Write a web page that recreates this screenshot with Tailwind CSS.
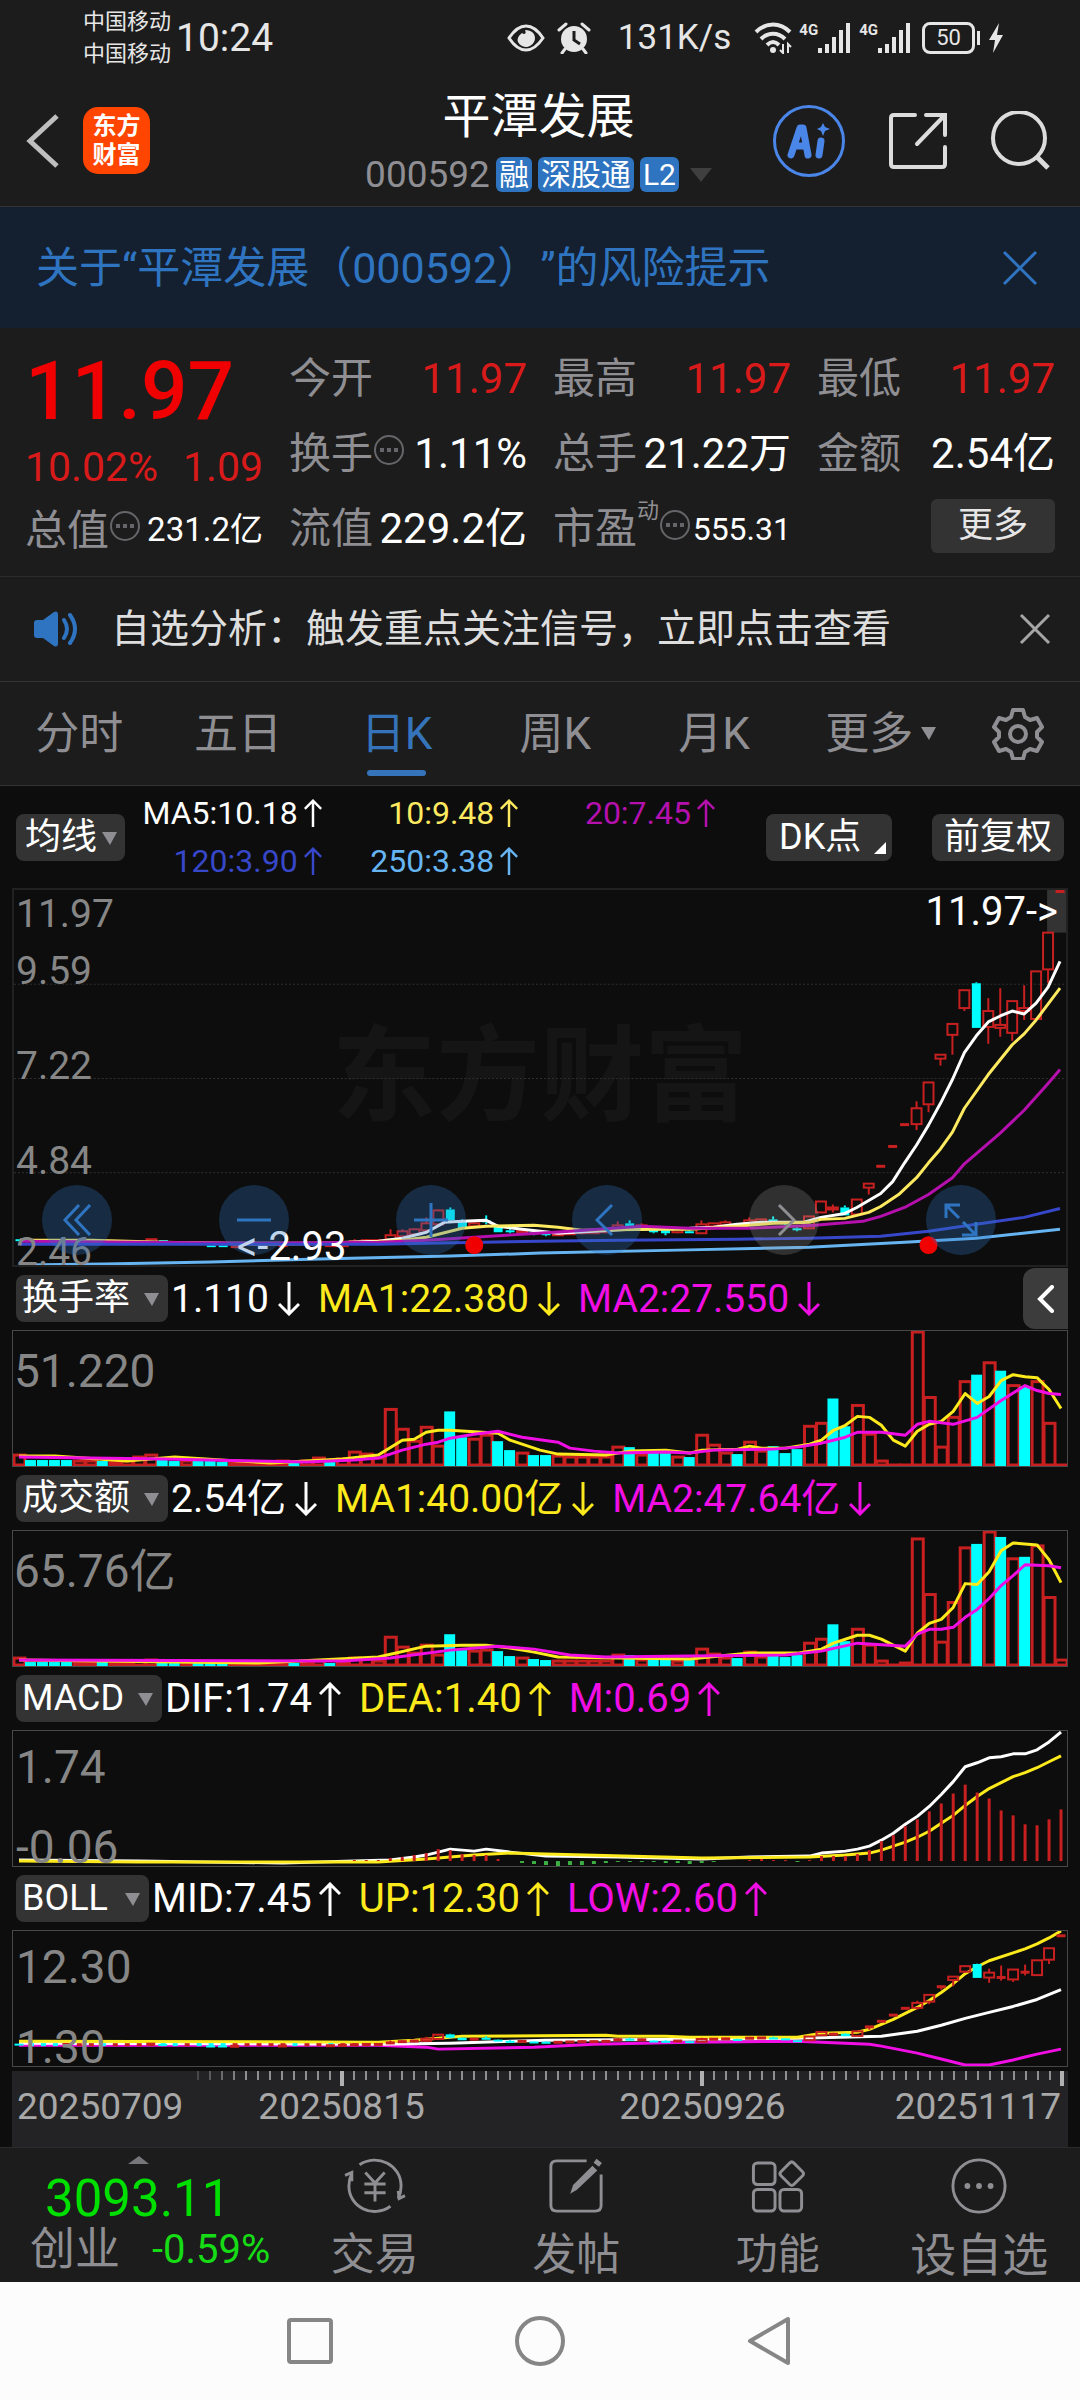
<!DOCTYPE html>
<html lang="zh-CN">
<head>
    <meta charset="UTF-8">
    <meta name="viewport" content="width=device-width, initial-scale=1.0">
    <title>平潭发展 000592</title>
    <script src="https://cdn.jsdelivr.net/npm/@tailwindcss/browser@4"></script>
</head>
<body class="bg-[#1c1c1c] text-white font-[Roboto,'Noto_Sans_CJK_SC',sans-serif]">
    <!-- shared icons -->
    <svg class="hidden">
        <symbol id="up" viewBox="0 0 22 34"><path d="M11 34V2M1 12L11 2l10 10" fill="none" stroke="currentColor" stroke-width="3"/></symbol>
        <symbol id="dn" viewBox="0 0 22 34"><path d="M11 0v32M1 22l10 10 10-10" fill="none" stroke="currentColor" stroke-width="3"/></symbol>
        <symbol id="tri" viewBox="0 0 15 13"><path d="M0 0h15L8 13z" fill="#8e8e93"/></symbol>
        <symbol id="info" viewBox="0 0 32 32"><circle cx="16" cy="16" r="14" fill="none" stroke="#66666a" stroke-width="2"/><path d="M7 16h4M14 16h4M21 16h4" stroke="#66666a" stroke-width="4"/></symbol>
        <symbol id="signal" viewBox="0 0 32 32"><path d="M0 26h4v5H0zM7 22h4v9H7zM14 15h4v16h-4zM21 8h4v23h-4zM28 1h4v30h-4z" fill="#e6e6e6"/></symbol>
    </svg>

    <div class="flex flex-col w-full min-h-screen">

        <!-- status bar -->
        <div class="flex items-center h-[75px] pl-[83px] pr-[76px] text-[#e6e6e6]">
            <div class="text-[22px] leading-[32px]">
                <div>中国移动</div>
                <div>中国移动</div>
            </div>
            <div class="ml-[5px] text-[39px] leading-[48px]">10:24</div>
            <div class="flex items-center ml-auto">
                <svg class="w-[38px] h-[32px]" viewBox="0 0 38 28" fill="none">
                    <path d="M2 14C8 5 13 2 19 2s11 3 17 12c-6 9-11 12-17 12S8 23 2 14z" stroke="#e6e6e6" stroke-width="3"/>
                    <path d="M18 6c2 4-1 5-3 3-4 3-5 6-4 9 2 4 6 5 9 5 5-1 8-5 8-9s-3-8-10-8z" fill="#e6e6e6"/>
                </svg>
                <svg class="w-[34px] h-[32px] ml-[12px]" viewBox="0 0 34 32" fill="none">
                    <circle cx="17" cy="17" r="13" fill="#e6e6e6"/>
                    <path d="M2 8l7-6M32 8l-7-6M8 27l-3 4M26 27l3 4" stroke="#e6e6e6" stroke-width="3" stroke-linecap="round"/>
                    <path d="M17 9v9l6 4" stroke="#1c1c1c" stroke-width="3"/>
                </svg>
                <span class="ml-[27px] text-[35px] leading-[48px]">131K/s</span>
                <svg class="w-[40px] h-[32px] ml-[23px]" viewBox="0 0 40 32" fill="none" stroke="#e6e6e6" stroke-width="4">
                    <path d="M2 10C12 0 26 0 36 10"/>
                    <path d="M7 17c7-7 17-7 24 0"/>
                    <path d="M13 23c4-4 8-4 12 0"/>
                    <circle cx="19" cy="28" r="3" fill="#e6e6e6" stroke="none"/>
                    <path d="M29 22v9l-3-3M34 31v-9l3 3" stroke-width="2"/>
                </svg>
                <div class="flex ml-[5px]">
                    <span class="text-[15px] leading-[16px] font-bold">4G</span>
                    <svg class="w-[32px] h-[32px]"><use href="#signal"/></svg>
                </div>
                <div class="flex ml-[9px]">
                    <span class="text-[15px] leading-[16px] font-bold">4G</span>
                    <svg class="w-[32px] h-[32px]"><use href="#signal"/></svg>
                </div>
                <div class="flex items-center justify-center w-[53px] h-[32px] ml-[12px] border-3 border-[#e6e6e6] rounded-[8px] text-[22px] leading-[26px]">50</div>
                <div class="w-[3px] h-[14px] ml-[2px] bg-[#e6e6e6]"></div>
                <svg class="w-[16px] h-[30px] ml-[8px]" viewBox="0 0 16 30" fill="#e6e6e6"><path d="M11 0L1 17h6L5 30 15 12H9z"/></svg>
            </div>
        </div>

        <!-- title -->
        <header class="grid grid-cols-[1fr_auto_1fr] items-center h-[131px] pl-[26px] pr-[29px]">
            <div class="flex items-center gap-[23px]">
                <button aria-label="返回">
                    <svg class="w-[34px] h-[56px]" viewBox="0 0 34 56" fill="none" stroke="#bfbfbf" stroke-width="5"><path d="M31 3L4 28l27 25"/></svg>
                </button>
                <div class="flex flex-col items-center justify-center w-[67px] h-[67px] rounded-[15px] bg-[#ff4500] text-[24px] leading-[29px] font-bold">
                    <span>东方</span>
                    <span>财富</span>
                </div>
            </div>
            <div class="flex flex-col items-center gap-[12px]">
                <h1 class="text-[48px] leading-[56px]">平潭发展</h1>
                <div class="flex items-center gap-[6px] h-[36px] text-[30px] leading-[35px]">
                    <span class="text-[37px] text-[#8e8e93]">000592</span>
                    <span class="px-[3px] rounded-[6px] bg-[#2f74c0]">融</span>
                    <span class="px-[3px] rounded-[6px] bg-[#2f74c0]">深股通</span>
                    <span class="px-[3px] rounded-[6px] bg-[#2f74c0]">L2</span>
                    <svg class="w-[22px] h-[14px] ml-[5px]" viewBox="0 0 22 14"><path d="M0 0h22L11 14z" fill="#3f3f3f"/></svg>
                </div>
            </div>
            <div class="flex items-center justify-end gap-[43px]">
                <button class="flex items-center justify-center w-[72px] h-[72px] rounded-full border-3 border-[#4a86e8]" aria-label="Ai">
                    <svg class="w-[46px] h-[36px]" viewBox="0 0 46 36" fill="none" stroke="#4a86e8" stroke-linecap="round" stroke-linejoin="round">
                        <path d="M5 32L14 5h3l5 27M10 23h10" stroke-width="7"/>
                        <path d="M35 18l-2 14" stroke-width="7"/>
                        <path d="M37 0l2 4 5 2-5 2-2 5-2-5-4-2 4-2z" fill="#4a86e8" stroke="none"/>
                    </svg>
                </button>
                <button aria-label="分享">
                    <svg class="w-[60px] h-[60px]" viewBox="0 0 60 60" fill="none" stroke="#dcdcdc" stroke-width="4">
                        <path d="M27 4H6q-3 0-3 3v46q0 3 3 3h48q3 0 3-3V36" stroke-linecap="round"/>
                        <path d="M38 4h19v20M56 5L29 33" stroke-linecap="round"/>
                    </svg>
                </button>
                <button aria-label="搜索">
                    <svg class="w-[60px] h-[60px]" viewBox="0 0 60 60" fill="none" stroke="#dcdcdc" stroke-width="4"><circle cx="28" cy="27" r="26"/><path d="M46 46l11 11" stroke-width="5"/></svg>
                </button>
            </div>
        </header>

        <!-- risk banner -->
        <div class="flex items-center justify-between h-[122px] pl-[36px] pr-[42px] bg-[#14202f] border-t border-[#333] text-[#2f74c0]">
            <a href="#" class="text-[43px] leading-[56px] [text-spacing-trim:space-all]">关于“平潭发展（000592）”的风险提示</a>
            <button aria-label="关闭提示">
                <svg class="w-[36px] h-[36px]" viewBox="0 0 36 36" stroke="#2f74c0" stroke-width="3"><path d="M2 2l32 32M34 2L2 34"/></svg>
            </button>
        </div>

        <!-- quote -->
        <section class="flex gap-[26px] h-[249px] pl-[25px] pr-[25px] pt-[13px] border-b border-[#2b2b2b] text-[42px]">
            <div class="w-[238px]">
                <div class="flex items-center h-[100px] text-[82px] leading-[100px] font-medium text-[#f00000]">11.97</div>
                <div class="flex items-center justify-between h-[54px] text-[41px] text-[#d81a1a]"><span>10.02%</span><span>1.09</span></div>
                <div class="flex items-center h-[70px] whitespace-nowrap">
                    <span class="text-[#8e8e93]">总值</span>
                    <svg class="w-[32px] h-[32px] mb-[8px]"><use href="#info"/></svg>
                    <span class="ml-auto text-[33px]">231.2亿</span>
                </div>
            </div>
            <div class="grid flex-1 grid-cols-3 auto-rows-[75px] gap-x-[26px] whitespace-nowrap">
                <div class="flex items-center justify-between"><span class="text-[#8e8e93]">今开</span><span class="text-[#d81a1a]">11.97</span></div>
                <div class="flex items-center justify-between"><span class="text-[#8e8e93]">最高</span><span class="text-[#d81a1a]">11.97</span></div>
                <div class="flex items-center justify-between"><span class="text-[#8e8e93]">最低</span><span class="text-[#d81a1a]">11.97</span></div>
                <div class="flex items-center">
                    <span class="text-[#8e8e93]">换手</span>
                    <svg class="w-[32px] h-[32px] mb-[8px]"><use href="#info"/></svg>
                    <span class="ml-auto">1.11%</span>
                </div>
                <div class="flex items-center justify-between"><span class="text-[#8e8e93]">总手</span><span>21.22万</span></div>
                <div class="flex items-center justify-between"><span class="text-[#8e8e93]">金额</span><span>2.54亿</span></div>
                <div class="flex items-center justify-between"><span class="text-[#8e8e93]">流值</span><span>229.2亿</span></div>
                <div class="flex items-center">
                    <span class="text-[#8e8e93]">市盈</span>
                    <span class="mb-[36px] text-[22px] leading-[30px] text-[#8e8e93]">动</span>
                    <svg class="w-[32px] h-[32px] mb-[8px]"><use href="#info"/></svg>
                    <span class="ml-auto text-[32px]">555.31</span>
                </div>
                <div class="flex items-center justify-end"><button class="w-[124px] h-[54px] mb-[5px] rounded-[6px] bg-[#333] text-[35px] leading-[54px] text-[#e6e6e6]">更多</button></div>
            </div>
        </section>

        <!-- notice -->
        <div class="flex items-center h-[105px] pl-[32px] pr-[29px] border-b border-[#333]">
            <svg class="w-[48px] h-[40px]" viewBox="0 0 48 40" fill="none" stroke="#2f74c0" stroke-width="4">
                <path d="M2 14q0-3 3-3h6L22 3q4-2 4 3v28q0 5-4 3l-11-8H5q-3 0-3-3z" fill="#2f74c0" stroke="none"/>
                <path d="M32 11q6 9 0 18M38 6q10 14 0 28" stroke-linecap="round"/>
            </svg>
            <a href="#" class="ml-[31px] text-[39px] leading-[52px] text-[#dedede]">自选分析：触发重点关注信号，立即点击查看</a>
            <button class="ml-auto" aria-label="关闭通知">
                <svg class="w-[32px] h-[32px]" viewBox="0 0 32 32" stroke="#a6a6a6" stroke-width="3"><path d="M2 2l28 28M30 2L2 30"/></svg>
            </button>
        </div>

        <!-- period tabs -->
        <nav class="flex items-center h-[104px] border-b border-[#333] text-[44px] leading-[60px] text-[#8e8e93]">
            <div class="flex flex-1">
                <button class="flex-1">分时</button>
                <button class="flex-1">五日</button>
                <button class="flex flex-1 justify-center text-[#3574ba]"><span class="relative">日K<span class="absolute inset-x-[6px] -bottom-[12px] h-[6px] rounded-full bg-[#3574ba]"></span></span></button>
                <button class="flex-1">周K</button>
                <button class="flex-1">月K</button>
                <button class="flex flex-1 items-center justify-center gap-[8px] pl-[8px]">更多<svg class="w-[15px] h-[13px]"><use href="#tri"/></svg></button>
            </div>
            <button aria-label="设置" class="flex w-[120px] pl-[32px]">
                <svg class="w-[52px] h-[52px]" viewBox="0 0 52 52" fill="none" stroke="#8e8e93" stroke-width="4" stroke-linejoin="round">
                    <path d="M21 2h10l2 7 5 3 7-2 5 9-5 5v5l5 5-5 9-7-2-5 3-2 7H21l-2-7-5-3-7 2-5-9 5-5v-5l-5-5 5-9 7 2 5-3z"/>
                    <circle cx="26" cy="26" r="8"/>
                </svg>
            </button>
        </nav>

        <main class="bg-[#0d0d0d] px-[12px]">
            <!-- moving averages -->
            <div class="flex items-center h-[102px] px-[4px] text-[36px]">
                <div class="relative">
                    <select aria-label="主图指标" class="appearance-none block h-[47px] pl-[9px] pr-[27px] rounded-[8px] bg-[#333] leading-[47px]"><option>均线</option></select>
                    <svg class="absolute right-[8px] top-[18px] w-[15px] h-[13px] pointer-events-none"><use href="#tri"/></svg>
                </div>
                <div class="grid flex-1 grid-cols-3 justify-items-end mr-[51px] text-[32px] leading-[48px] whitespace-nowrap">
                    <span class="flex items-center gap-[6px]">MA5:10.18<svg class="w-[18px] h-[28px]"><use href="#up"/></svg></span>
                    <span class="flex items-center gap-[6px] text-[#fdea60]">10:9.48<svg class="w-[18px] h-[28px]"><use href="#up"/></svg></span>
                    <span class="flex items-center gap-[6px] text-[#b510ae]">20:7.45<svg class="w-[18px] h-[28px]"><use href="#up"/></svg></span>
                    <span class="flex items-center gap-[6px] text-[#3747c9]">120:3.90<svg class="w-[18px] h-[28px]"><use href="#up"/></svg></span>
                    <span class="flex items-center gap-[6px] text-[#66b5f2]">250:3.38<svg class="w-[18px] h-[28px]"><use href="#up"/></svg></span>
                </div>
                <button class="relative w-[126px] h-[47px] pl-[13px] rounded-[8px] bg-[#333] leading-[47px] text-left">DK点<svg class="absolute right-[6px] bottom-[7px] w-[12px] h-[12px]" viewBox="0 0 12 12"><path d="M12 0v12H0z" fill="#fff"/></svg></button>
                <button class="w-[132px] h-[47px] ml-[40px] rounded-[8px] bg-[#333] leading-[47px]">前复权</button>
            </div>

            <!-- price chart -->
            <div class="relative h-[379px] border-2 border-[#212121] text-[39px] leading-[48px] text-[#868686]">
                <div class="absolute inset-0 flex items-center justify-center text-[104px] font-bold text-[#151515]">东方财富</div>
                <svg id="price" class="absolute inset-0 w-full h-full" viewBox="0 0 1056 378" preserveAspectRatio="none" fill="none"></svg>
                <span class="absolute left-[2px] top-[0px]">11.97</span>
                <span class="absolute left-[2px] top-[57px]">9.59</span>
                <span class="absolute left-[2px] top-[152px]">7.22</span>
                <span class="absolute left-[2px] top-[247px]">4.84</span>
                <span class="absolute left-[2px] top-[338px]">2.46</span>
                <span class="absolute right-[8px] top-[-2px] text-[40px] text-white">11.97-&gt;</span>
                <span class="absolute left-[223px] top-[333px] text-[40px] text-white">&lt;-2.93</span>
                <div class="absolute left-[28px] right-[70px] top-[295px] flex justify-between">
                    <button class="flex items-center justify-center w-[70px] h-[70px] rounded-full bg-[#2f74c0]/30" aria-label="最左">
                        <svg class="w-[30px] h-[34px]" viewBox="0 0 30 34" fill="none" stroke="#2f74c0" stroke-width="3"><path d="M17 2L3 17l14 15M28 2L14 17l14 15"/></svg>
                    </button>
                    <button class="flex items-center justify-center w-[70px] h-[70px] rounded-full bg-[#2f74c0]/30" aria-label="缩小">
                        <svg class="w-[34px] h-[34px]" viewBox="0 0 34 34" stroke="#2f74c0" stroke-width="3"><path d="M0 17h34"/></svg>
                    </button>
                    <button class="flex items-center justify-center w-[70px] h-[70px] rounded-full bg-[#2f74c0]/30" aria-label="放大">
                        <svg class="w-[34px] h-[34px]" viewBox="0 0 34 34" stroke="#2f74c0" stroke-width="3"><path d="M0 17h34M17 0v34"/></svg>
                    </button>
                    <button class="flex items-center justify-center w-[70px] h-[70px] rounded-full bg-[#2f74c0]/30" aria-label="左移">
                        <svg class="w-[24px] h-[34px]" viewBox="0 0 24 34" fill="none" stroke="#2f74c0" stroke-width="3"><path d="M17 2L2 17l15 15"/></svg>
                    </button>
                    <button class="flex items-center justify-center w-[70px] h-[70px] rounded-full bg-[#9a9a9a]/25" aria-label="右移">
                        <svg class="w-[24px] h-[34px]" viewBox="0 0 24 34" fill="none" stroke="#8e8e93" stroke-width="3"><path d="M7 2l15 15L7 32"/></svg>
                    </button>
                    <button class="flex items-center justify-center w-[70px] h-[70px] rounded-full bg-[#2f74c0]/30" aria-label="全屏">
                        <svg class="w-[36px] h-[36px]" viewBox="0 0 36 36" fill="none" stroke="#2f74c0" stroke-width="3"><path d="M3 16V3h14M3 3l13 13M33 20v13H19M33 33L20 20"/></svg>
                    </button>
                </div>
            </div>

            <!-- turnover rate -->
            <div class="flex items-center h-[63px] pl-[4px] text-[39px] leading-[48px]">
                <div class="relative text-[36px]">
                    <select aria-label="副图一" class="appearance-none block h-[47px] pl-[6px] pr-[37px] rounded-[8px] bg-[#333] leading-[47px]"><option>换手率</option></select>
                    <svg class="absolute right-[9px] top-[18px] w-[15px] h-[13px] pointer-events-none"><use href="#tri"/></svg>
                </div>
                <span class="flex items-center gap-[9px] ml-[3px]">1.110<svg class="w-[22px] h-[34px]"><use href="#dn"/></svg></span>
                <span class="flex items-center gap-[9px] ml-[18px] text-[#fdea1c]">MA1:22.380<svg class="w-[22px] h-[34px]"><use href="#dn"/></svg></span>
                <span class="flex items-center gap-[9px] ml-[18px] text-[#f00ee4]">MA2:27.550<svg class="w-[22px] h-[34px]"><use href="#dn"/></svg></span>
                <button class="flex items-center justify-center w-[45px] h-[61px] ml-auto rounded-l-[12px] bg-[#3c3c3c]" aria-label="展开">
                    <svg class="w-[18px] h-[28px]" viewBox="0 0 18 28" fill="none" stroke="#fff" stroke-width="4" stroke-linecap="round"><path d="M15 2L3 14l12 12"/></svg>
                </button>
            </div>
            <div class="relative h-[137px] border border-[#484848] text-[46px] leading-[56px] text-[#868686]">
                <svg id="turnover" class="absolute inset-0 w-full h-full" viewBox="0 0 1056 136" preserveAspectRatio="none" fill="none"></svg>
                <span class="absolute left-[1px] top-[12px]">51.220</span>
            </div>

            <!-- amount -->
            <div class="flex items-center h-[63px] pl-[4px] text-[39px] leading-[48px]">
                <div class="relative text-[36px]">
                    <select aria-label="副图二" class="appearance-none block h-[47px] pl-[6px] pr-[37px] rounded-[8px] bg-[#333] leading-[47px]"><option>成交额</option></select>
                    <svg class="absolute right-[9px] top-[18px] w-[15px] h-[13px] pointer-events-none"><use href="#tri"/></svg>
                </div>
                <span class="flex items-center gap-[9px] ml-[3px]">2.54亿<svg class="w-[22px] h-[34px]"><use href="#dn"/></svg></span>
                <span class="flex items-center gap-[9px] ml-[18px] text-[#fdea1c]">MA1:40.00亿<svg class="w-[22px] h-[34px]"><use href="#dn"/></svg></span>
                <span class="flex items-center gap-[9px] ml-[18px] text-[#f00ee4]">MA2:47.64亿<svg class="w-[22px] h-[34px]"><use href="#dn"/></svg></span>
            </div>
            <div class="relative h-[137px] border border-[#484848] text-[46px] leading-[56px] text-[#868686]">
                <svg id="amount" class="absolute inset-0 w-full h-full" viewBox="0 0 1056 136" preserveAspectRatio="none" fill="none"></svg>
                <span class="absolute left-[1px] top-[12px]">65.76亿</span>
            </div>

            <!-- macd -->
            <div class="flex items-center h-[63px] pl-[4px] text-[40px] leading-[48px]">
                <div class="relative text-[36px]">
                    <select aria-label="副图三" class="appearance-none block h-[47px] pl-[6px] pr-[37px] rounded-[8px] bg-[#333] leading-[47px]"><option>MACD</option></select>
                    <svg class="absolute right-[9px] top-[18px] w-[15px] h-[13px] pointer-events-none"><use href="#tri"/></svg>
                </div>
                <span class="flex items-center gap-[7px] ml-[3px]">DIF:1.74<svg class="w-[22px] h-[34px]"><use href="#up"/></svg></span>
                <span class="flex items-center gap-[7px] ml-[18px] text-[#fdea1c]">DEA:1.40<svg class="w-[22px] h-[34px]"><use href="#up"/></svg></span>
                <span class="flex items-center gap-[7px] ml-[18px] text-[#f00ee4]">M:0.69<svg class="w-[22px] h-[34px]"><use href="#up"/></svg></span>
            </div>
            <div class="relative h-[137px] border border-[#484848] text-[46px] leading-[56px] text-[#868686]">
                <svg id="macd" class="absolute inset-0 w-full h-full" viewBox="0 0 1056 136" preserveAspectRatio="none" fill="none"></svg>
                <span class="absolute left-[3px] top-[8px]">1.74</span>
                <span class="absolute left-[3px] top-[88px]">-0.06</span>
            </div>

            <!-- boll -->
            <div class="flex items-center h-[63px] pl-[4px] text-[40px] leading-[48px]">
                <div class="relative text-[36px]">
                    <select aria-label="副图四" class="appearance-none block h-[47px] pl-[6px] pr-[41px] rounded-[8px] bg-[#333] leading-[47px]"><option>BOLL</option></select>
                    <svg class="absolute right-[9px] top-[18px] w-[15px] h-[13px] pointer-events-none"><use href="#tri"/></svg>
                </div>
                <span class="flex items-center gap-[7px] ml-[3px]">MID:7.45<svg class="w-[22px] h-[34px]"><use href="#up"/></svg></span>
                <span class="flex items-center gap-[7px] ml-[18px] text-[#fdea1c]">UP:12.30<svg class="w-[22px] h-[34px]"><use href="#up"/></svg></span>
                <span class="flex items-center gap-[7px] ml-[18px] text-[#f00ee4]">LOW:2.60<svg class="w-[22px] h-[34px]"><use href="#up"/></svg></span>
            </div>
            <div class="relative h-[137px] border border-[#484848] text-[46px] leading-[56px] text-[#868686]">
                <svg id="boll" class="absolute inset-0 w-full h-full" viewBox="0 0 1056 136" preserveAspectRatio="none" fill="none"></svg>
                <span class="absolute left-[3px] top-[8px]">12.30</span>
                <span class="absolute left-[3px] top-[88px]">1.30</span>
            </div>

            <!-- dates -->
            <div class="relative h-[76px] mt-[4px] pt-[12px] bg-[#232325] text-[37px] leading-[48px] text-[#a8a8a8]">
                <svg id="axis" class="absolute left-0 top-0 w-full h-[16px]" viewBox="0 0 1056 16" preserveAspectRatio="none"></svg>
                <div class="flex pl-[5px] pr-[7px]">
                    <span>20250709</span>
                    <span class="ml-[75px]">20250815</span>
                    <span class="ml-auto mr-[109px]">20250926</span>
                    <span>20251117</span>
                </div>
            </div>
        </main>

        <!-- bottom bar -->
        <footer class="flex h-[135px] border-t border-[#2b2b2b] text-[44px] leading-[54px] text-[#8e8e93]">
            <a href="#" class="flex flex-col w-[274px] pl-[30px]">
                <svg class="w-[21px] h-[8px] mt-[8px] ml-[98px]" viewBox="0 0 21 8"><path d="M0 8h21L11 0z" fill="#77777b"/></svg>
                <span class="ml-[15px] mt-[8px] text-[51px] text-[#00e000]">3093.11</span>
                <span class="flex items-center text-[45px] leading-[48px]">创业<span class="ml-[32px] text-[40px] text-[#16dc16]">-0.59%</span></span>
            </a>
            <button class="flex flex-col items-center flex-1 pt-[9px]">
                <svg class="w-[66px] h-[60px]" viewBox="0 0 66 60" fill="none" stroke="#8e8e93" stroke-width="3">
                    <path d="M17 8C35-4 60 8 60 30q0 7-3 13M49 51C31 64 6 52 6 30q0-7 3-13"/>
                    <path d="M2 19l7-3v9M64 40l-6 3-1-8"/>
                    <path d="M23 16l10 11 10-11M33 27v19M22 28h22M22 37h22"/>
                </svg>
                <span class="mt-[13px]">交易</span>
            </button>
            <button class="flex flex-col items-center flex-1 pt-[9px]">
                <svg class="w-[60px] h-[60px]" viewBox="0 0 60 60" fill="none" stroke="#8e8e93" stroke-width="3">
                    <path d="M41 4H10q-6 0-6 6v40q0 6 6 6h40q6 0 6-6V18"/>
                    <path d="M24 38l3-9L47 9l5 5-21 20z" fill="#8e8e93" stroke="none"/>
                    <path d="M51 8l3-4" stroke-width="7"/>
                </svg>
                <span class="mt-[13px]">发帖</span>
            </button>
            <button class="flex flex-col items-center flex-1 pt-[9px]">
                <svg class="w-[60px] h-[60px]" viewBox="0 0 60 60" fill="none" stroke="#8e8e93" stroke-width="3">
                    <rect x="5" y="6" width="22" height="22" rx="4"/>
                    <path d="M42 6q2-2 4 0l9 9q2 2 0 4l-9 9q-2 2-4 0l-9-9q-2-2 0-4z"/>
                    <rect x="5" y="33" width="22" height="22" rx="4"/>
                    <rect x="32" y="33" width="22" height="22" rx="4"/>
                </svg>
                <span class="mt-[12px] text-[42px]">功能</span>
            </button>
            <button class="flex flex-col items-center flex-1 pt-[9px]">
                <svg class="w-[60px] h-[60px]" viewBox="0 0 60 60" fill="#8e8e93">
                    <circle cx="30" cy="30" r="27" fill="none" stroke="#8e8e93" stroke-width="3"/>
                    <circle cx="18" cy="30" r="3"/><circle cx="30" cy="30" r="3"/><circle cx="42" cy="30" r="3"/>
                </svg>
                <span class="mt-[13px] text-[46px]">设自选</span>
            </button>
        </footer>

        <!-- system keys -->
        <div class="flex flex-1 items-center justify-center gap-[180px] min-h-[118px] bg-[#fcfcfc]">
            <button aria-label="最近任务"><svg class="w-[50px] h-[50px]" viewBox="0 0 50 50" fill="none" stroke="#868686" stroke-width="4"><rect x="4" y="4" width="42" height="42" rx="2"/></svg></button>
            <button aria-label="主页"><svg class="w-[50px] h-[50px]" viewBox="0 0 50 50" fill="none" stroke="#868686" stroke-width="4"><circle cx="25" cy="25" r="23"/></svg></button>
            <button aria-label="返回键"><svg class="w-[50px] h-[50px]" viewBox="0 0 50 50" fill="none" stroke="#868686" stroke-width="4" stroke-linejoin="round"><path d="M43 3v44L5 25z"/></svg></button>
        </div>
    </div>

    <script>
        const RED = "#c82020";
        const CYAN = "#00ffff";
        const YELLOW = "#fdea1c";
        const PINK = "#f00ee4";

        // x of trading day i, one every 12 units
        function dayX(i) {
            return 6 + i * 12;
        }

        // points: [day, y, day, y, ...]
        function line(points, color, width) {
            let p = "";
            for (let i = 0; i < points.length; i += 2) {
                p += dayX(points[i]) + "," + points[i + 1] + " ";
            }
            return `<polyline points="${p}" stroke="${color}" stroke-width="${width}" stroke-linejoin="round"/>`;
        }

        function candle(c, scale, shift) {
            const x = dayX(c[0]);
            const [top, bottom, high, low] = c.slice(2).map(v => v * scale + shift);
            const color = c[1] === "c" ? CYAN : RED;
            let s = "";
            if (high < top) s += `<path d="M${x} ${high}V${top}" stroke="${color}" stroke-width="2"/>`;
            if (low > bottom) s += `<path d="M${x} ${bottom}V${low}" stroke="${color}" stroke-width="2"/>`;
            const h = bottom - top;
            if (c[1] === "c") {
                s += `<rect x="${x - 4.5}" y="${top}" width="9" height="${Math.max(h, 2)}" fill="${color}"/>`;
            } else if (h < 2) {
                s += `<rect x="${x - 4.5}" y="${top - 1}" width="9" height="3" fill="${color}"/>`;
            } else {
                s += `<rect x="${x - 5}" y="${top}" width="10" height="${h}" stroke="${color}" stroke-width="2"/>`;
            }
            return s;
        }

        // days that closed lower
        const down = [1, 2, 3, 4, 7, 12, 13, 15, 16, 17, 23, 26, 36, 37, 40, 41, 43, 44, 51, 53, 54, 56, 60, 63, 64, 65, 68, 69, 80, 82, 84];

        function bars(values) {
            return values.map(function (h, i) {
                const x = dayX(i);
                if (down.includes(i)) {
                    return `<rect x="${x - 6}" y="${136 - h}" width="11" height="${h}" fill="${CYAN}"/>`;
                }
                return `<rect x="${x - 5}" y="${137 - h}" width="11" height="${Math.max(h - 2, 1)}" stroke="${RED}" stroke-width="3"/>`;
            }).join("");
        }

        // day, type, body top, body bottom, high, low
        const candles = [
            [0, "c", 352, 354, 352, 354], [4, "r", 353, 355, 353, 355], [11, "r", 352, 355, 352, 355], [12, "c", 353, 355, 353, 355],
            [16, "c", 358, 359, 358, 359], [17, "c", 358, 359, 358, 359], [18, "r", 359, 360, 359, 360], [22, "r", 358, 359, 358, 359],
            [26, "r", 357, 359, 357, 359], [27, "r", 356, 359, 356, 359], [28, "r", 354, 356, 352, 357], [29, "r", 353, 356, 352, 356], [30, "r", 353, 355, 352, 355],
            [31, "r", 348, 352, 342, 354], [32, "r", 344, 349, 342, 350], [33, "r", 342, 347, 341, 348], [34, "r", 336, 343, 330, 345],
            [35, "r", 323, 337, 322, 338], [36, "c", 322, 333, 320, 335], [37, "c", 333, 341, 332, 341], [38, "r", 336, 339, 335, 341],
            [39, "c", 333, 335, 328, 337], [40, "c", 339, 345, 338, 345], [41, "c", 343, 345, 340, 346], [42, "r", 343, 345, 343, 345], [43, "c", 345, 347, 344, 348],
            [44, "c", 346, 348, 345, 349], [45, "r", 346, 348, 345, 348], [46, "r", 345, 347, 345, 347], [47, "r", 344, 346, 342, 347], [48, "r", 344, 346, 342, 346],
            [49, "r", 343, 345, 340, 346], [50, "r", 338, 342, 334, 343], [51, "c", 336, 339, 333, 341], [52, "r", 338, 341, 336, 342],
            [53, "c", 342, 345, 341, 346], [54, "c", 343, 346, 341, 348], [55, "r", 342, 345, 341, 346], [56, "c", 344, 346, 343, 346],
            [57, "r", 337, 346, 333, 346], [58, "r", 336, 339, 336, 340], [59, "r", 335, 338, 333, 339], [60, "c", 337, 339, 336, 339],
            [61, "r", 333, 337, 330, 337], [62, "r", 332, 335, 332, 336], [63, "c", 332, 335, 329, 336], [64, "c", 335, 337, 334, 338],
            [65, "c", 341, 343, 340, 344], [66, "r", 329, 341, 329, 341], [67, "r", 314, 325, 314, 325], [68, "r", 320, 322, 317, 325],
            [69, "c", 320, 328, 318, 328], [70, "r", 312, 327, 312, 327], [71, "r", 296, 300, 296, 307], [72, "r", 278, 278, 278, 278],
            [73, "r", 258, 258, 258, 258], [74, "r", 236, 236, 236, 236], [75, "r", 220, 236, 213, 242], [76, "r", 194, 216, 194, 224],
            [77, "r", 166, 170, 166, 177], [78, "r", 135, 146, 135, 166], [79, "r", 101, 119, 101, 122], [80, "c", 94, 139, 93, 139],
            [81, "r", 122, 138, 109, 155], [82, "r", 136, 139, 99, 148], [83, "r", 112, 144, 112, 152], [84, "r", 119, 122, 96, 131],
            [85, "r", 82, 130, 82, 130], [86, "r", 43, 80, 43, 94], [87, "r", 1, 1, 1, 1]
        ];

        const turnover = [12, 6, 6, 6, 6, 6, 6, 5, 5, 6, 10, 12, 6, 5, 6, 5, 5, 4, 4, 3, 3, 4, 6, 3, 6, 9, 4, 8, 15, 13, 9,
            58, 38, 26, 40, 21, 55, 29, 28, 32, 25, 16, 14, 11, 11, 11, 10, 10, 10, 10, 20, 19, 12, 13, 13, 10, 9, 32, 22, 14, 12,
            25, 16, 20, 13, 17, 41, 44, 68, 40, 62, 33, 6, 2, 2, 136, 70, 20, 50, 86, 92, 105, 96, 82, 80, 86, 44, 2];
        const amount = [9, 4, 4, 4, 4, 4, 4, 4, 4, 4, 6, 7, 4, 3, 4, 3, 3, 3, 3, 3, 3, 3, 4, 3, 4, 6, 3, 5, 9, 8, 6,
            30, 20, 14, 22, 12, 32, 16, 16, 17, 15, 10, 9, 7, 6, 6, 6, 6, 6, 6, 12, 11, 7, 8, 8, 6, 6, 18, 13, 9, 8,
            15, 10, 11, 9, 11, 24, 28, 42, 25, 38, 22, 6, 2, 4, 129, 73, 25, 65, 120, 123, 136, 130, 109, 110, 122, 70, 7];
        // macd bars, from day 28
        const macd = [1, 1, 1, 3, 4, 6, 8, 12, 11, 7, 6, 6, 2, 0, -2, -3, -4, -5, -4, -4, -3, -2, -1, -1, -1, -1, -2, -2, -3, -2, -1, 0, 0, 1, 2, 1, 1, -1, 1,
            5, 5, 5, 7, 11, 20, 26, 35, 42, 50, 58, 68, 77, 69, 63, 51, 46, 37, 36, 42, 52];

        let s = `<path d="M0 95H1056M0 190H1056M0 285H1056" stroke="#303030" stroke-dasharray="2 2"/>`;
        s += `<rect x="1037" y="0" width="19" height="43" fill="#333"/>`;
        s += candles.map(c => candle(c, 1, 0)).join("");
        s += line([0, 378, 7, 377, 16, 375, 25, 372, 36, 369, 43.5, 366, 55, 363, 66, 360, 74, 355, 80, 351, 87, 342], "#66b5f2", 3);
        s += line([0, 353, 10, 355, 17, 356, 25, 356, 30, 354, 32, 351, 34, 345, 35.5, 335, 37, 334, 39, 333, 40, 339, 42, 342, 43.5, 344, 45, 346, 48, 344, 51, 342, 56, 341, 58, 340, 60, 337, 62, 335, 65.5, 335, 67, 330, 69, 326, 70, 320, 72, 306, 73, 294, 74, 275, 75, 257, 76, 237, 77, 215, 78, 191, 79, 164, 80, 147, 81, 133, 82, 127, 83, 122, 84, 125, 85, 114, 86, 98, 87, 72], "#fff", 3);
        s += line([0, 353, 6, 353, 12, 355, 20, 357, 28, 356, 32, 353, 34, 350, 37, 341, 39, 339, 43, 338, 45, 340, 47, 343, 53, 342, 56, 342, 60, 339, 63, 336, 66, 335, 67, 332, 69, 331, 71, 325, 72, 319, 73.5, 307, 75, 290, 76, 275, 77, 261, 78, 244, 79, 220, 81, 186, 83, 156, 84, 145, 85, 131, 87, 99], "#fdea60", 3);
        s += line([0, 354, 10, 355, 20, 356, 30, 355, 34, 353, 38, 350, 42, 347, 46, 344, 52, 339, 56, 341, 61, 341, 66.5, 338, 70.5, 334, 72, 329, 74, 320, 76, 307, 78, 290, 79, 276, 82, 245, 84, 222, 86, 195, 87, 181], "#b510ae", 3);
        s += line([0, 357, 30, 357, 34, 356, 43.5, 354, 50, 353, 60, 352, 66, 351, 72, 349, 76, 344, 80, 337, 84, 330, 87, 321], "#3747c9", 3);
        s += `<circle cx="462" cy="358" r="9" fill="#f00000"/><circle cx="918" cy="358" r="9" fill="#f00000"/>`;
        document.getElementById("price").innerHTML = s;

        document.getElementById("turnover").innerHTML = bars(turnover)
            + line([0, 126, 3, 126, 9, 131, 13, 127, 21, 133, 27, 129, 30, 125, 32, 110, 33, 109, 34, 102, 35, 100, 36, 100, 40, 103, 41, 110, 43.5, 120, 45, 124, 49, 125, 51, 121, 54, 120, 56, 123, 57, 120, 60, 119, 61, 116, 62, 118, 64, 118, 66, 114, 67, 110, 68, 100, 69, 95, 70, 86, 71, 87, 72, 95, 73, 110, 74, 116, 75, 101, 76, 94, 77, 91, 78, 81, 79, 63, 80, 73, 81, 66, 82, 50, 83, 44, 84, 46, 85, 47, 86, 59, 87, 78], YELLOW, 3)
            + line([0, 127, 12, 129, 24, 132, 28, 130, 30, 128, 32, 120, 34, 114, 35, 112, 36, 108, 38, 104, 40, 101, 42, 107, 45, 112, 46, 118, 48, 121, 50, 123, 54, 122, 56, 123, 58, 120, 63, 119, 65, 117, 67, 113, 68, 110, 69, 107, 70, 102, 72, 102, 74, 105, 75, 94, 76, 91, 78, 94, 80, 87, 82, 70, 84, 55, 85, 60, 86, 63, 87, 64], PINK, 3);

        document.getElementById("amount").innerHTML = bars(amount)
            + line([0, 130, 20, 133, 30, 127, 34, 116, 37, 115, 39, 115, 41, 118, 43, 122, 45, 127, 50, 128, 56, 129, 61, 123, 65, 123, 67, 119, 68, 113, 70, 105, 71, 105, 72, 109, 73, 115, 74, 121, 75, 103, 76, 93, 77, 89, 78, 77, 79, 53, 80, 54, 81, 41, 82, 20, 83, 12, 85, 14, 86, 29, 87, 52], YELLOW, 3)
            + line([0, 130, 27, 131, 31, 128, 36, 120, 40, 116, 43, 119, 46, 125, 49, 127, 56, 126, 64, 125, 67, 121, 70, 113, 74, 116, 75, 104, 76, 99, 77, 99, 78, 97, 79, 87, 80, 79, 81, 68, 82, 55, 83, 45, 84, 34, 86, 35, 87, 37], PINK, 3);

        document.getElementById("macd").innerHTML =
            line([0, 130, 10, 131, 22, 133, 28, 131, 31, 130, 33, 127, 34, 125, 35, 122, 36, 119, 38, 121, 39, 119, 41, 122, 44, 126, 50, 127, 57, 129, 61, 127, 66, 126, 67, 123, 69, 121, 70, 119, 71, 116, 72, 110, 73, 103, 74, 94, 75, 86, 76, 76, 77, 64, 78, 51, 79, 36, 80, 32, 81, 27, 82, 26, 83, 23, 84, 23, 85, 19, 86, 11, 87, 1], "#fff", 3)
            + line([0, 131, 10, 132, 30, 132, 34, 129, 38, 125, 41, 123, 44, 124, 57, 128, 66, 127, 69, 125, 71, 123, 72, 120, 73, 116, 74, 112, 75, 107, 76, 101, 77, 93, 78, 85, 79, 75, 80, 66, 81, 58, 82, 52, 83, 46, 84, 42, 85, 37, 86, 31, 87, 25], YELLOW, 3)
            + macd.map((v, i) => v === 0 ? "" : `<path d="M${dayX(i + 28)} 131v${-v}" stroke="${v > 0 ? RED : "#3cb043"}" stroke-width="${v > 0 ? 3 : 4}"/>`).join("");

        // same candles, on the wider 1.30 - 12.30 range
        let flat = "";
        for (let i = 1; i < 30; i++) {
            flat += `<rect x="${dayX(i) - 2}" y="113" width="5" height="3" fill="${down.includes(i) ? CYAN : RED}"/>`;
        }
        document.getElementById("boll").innerHTML =
            line([0, 115, 30, 115, 34, 117, 35, 119, 43, 117, 48, 114, 56, 112, 65, 111, 69, 113, 71, 114, 72, 116, 75, 123, 77, 129, 79, 135, 81, 135, 83, 130, 84, 127, 85, 124, 87, 119], PINK, 3)
            + line([0, 113, 30, 114, 36, 113, 41, 111, 44, 110, 56, 109, 65, 108, 72, 106, 75, 101, 77, 95, 79, 88, 81, 82, 83, 76, 85, 69, 87, 59], "#fff", 3)
            + line([0, 111, 30, 112, 33, 110, 36, 107, 37, 106, 49, 105, 50, 106, 54, 106, 56, 107, 65, 107, 67, 103, 70, 102, 71, 99, 73, 89, 75, 77, 76, 70, 77, 62, 78, 53, 79, 43, 80, 36, 81, 30, 83, 22, 84, 18, 85, 13, 86, 7, 87, 0], YELLOW, 3)
            + flat + candles.map(c => candle(c, 0.311, 4)).join("");

        let ticks = "";
        for (let i = 15; i < 88; i++) {
            const major = i === 27 || i === 57 || i === 87;
            ticks += `<path d="M${dayX(i)} 0v${major ? 15 : 9}" stroke="${major ? "#b0b0b0" : "#909090"}" stroke-width="${major ? 4 : 2}" opacity="${Math.min(1, (i - 13) / 6)}"/>`;
        }
        document.getElementById("axis").innerHTML = ticks;
    </script>
</body>
</html>
